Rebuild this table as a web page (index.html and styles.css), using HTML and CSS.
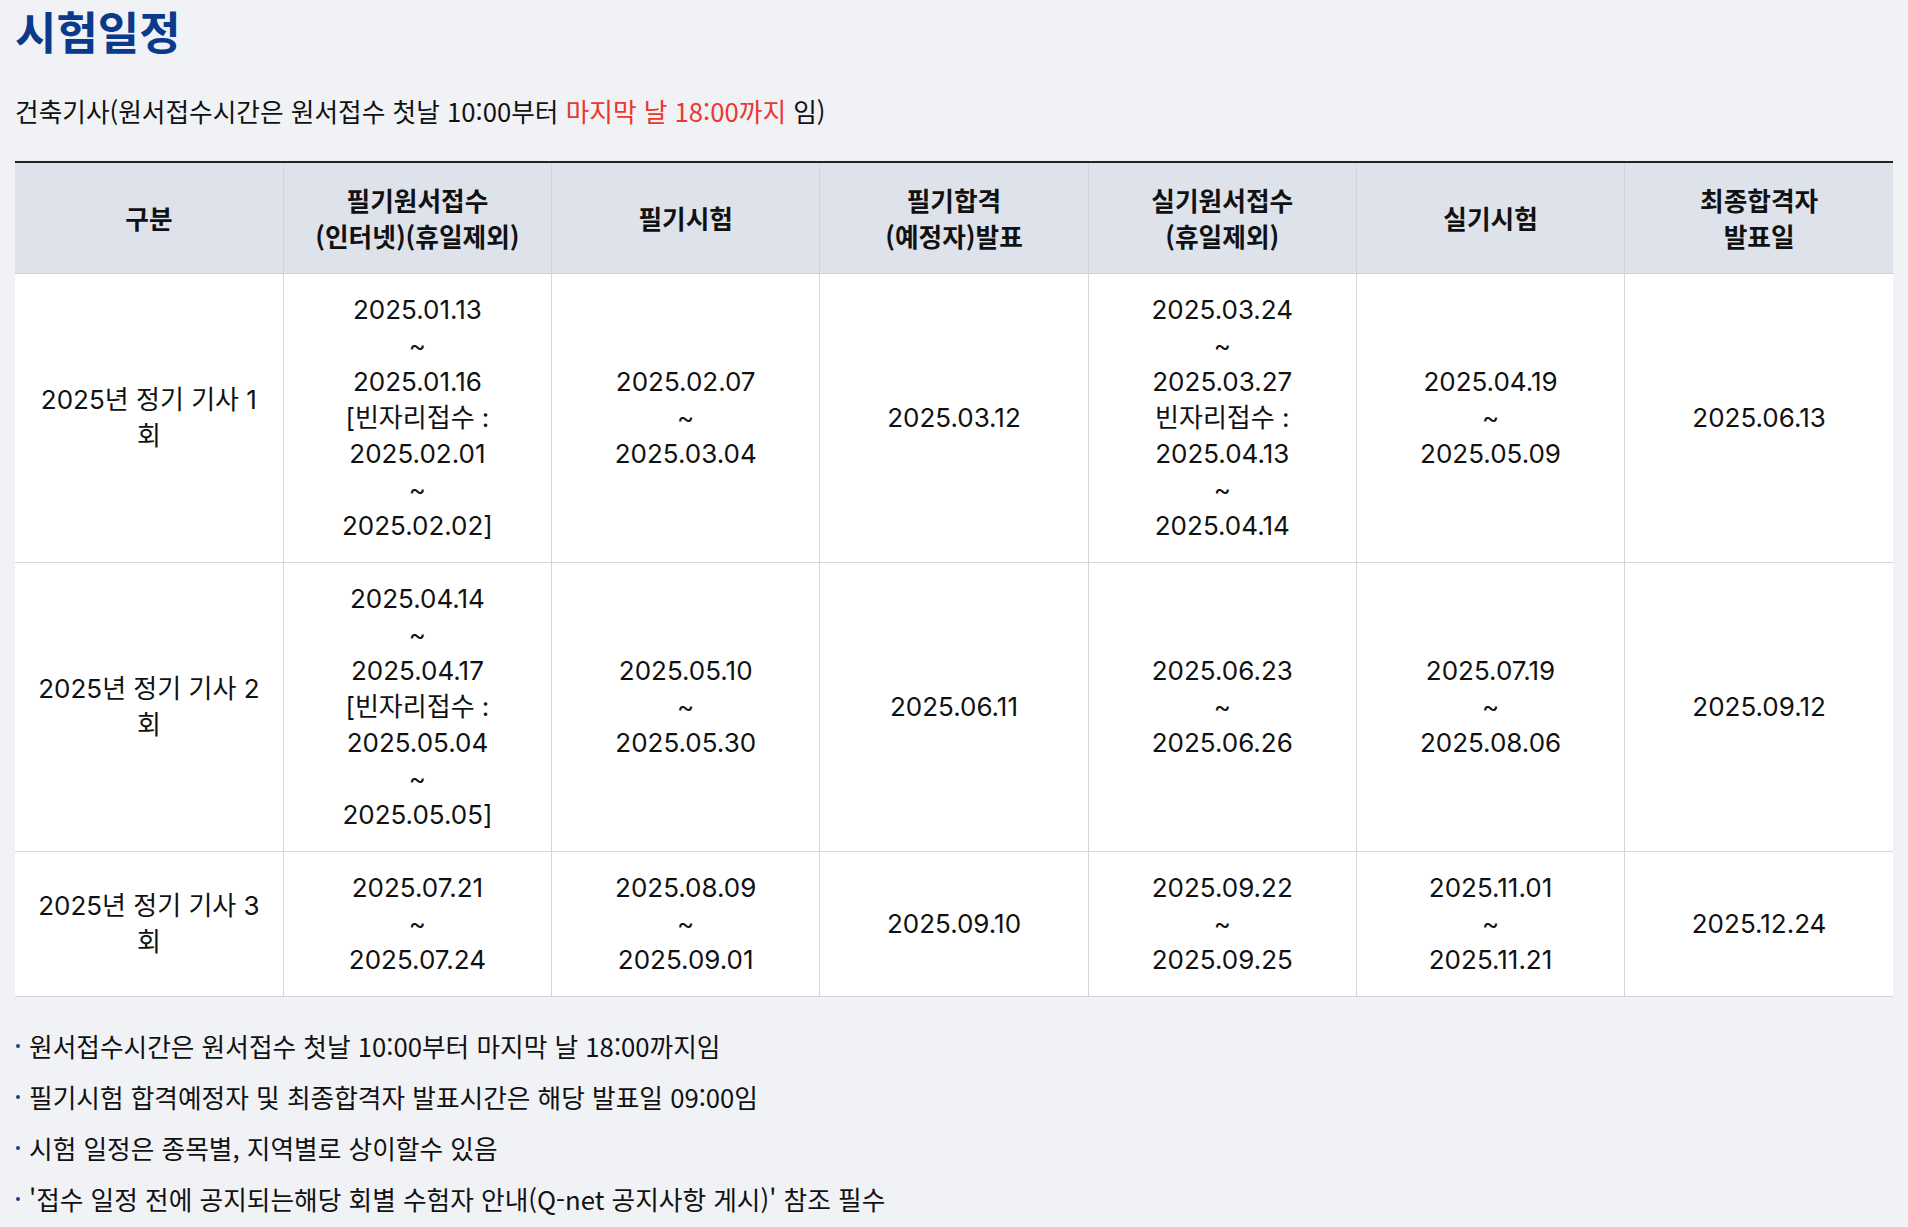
FILE: index.html
```html
<!DOCTYPE html>
<html lang="ko">
<head>
<meta charset="utf-8">
<title>시험일정</title>
<link rel="stylesheet" href="styles.css">
</head>
<body>
<main class="page">
  <h1 class="title">시험일정</h1>
  <p class="intro">건축기사(원서접수시간은 원서접수 첫날 10:00부터 <span class="red">마지막 날 18:00까지</span> 임)</p>
  <table class="schedule">
    <thead>
      <tr>
        <th>구분</th>
        <th>필기원서접수<br>(인터넷)(휴일제외)</th>
        <th>필기시험</th>
        <th>필기합격<br>(예정자)발표</th>
        <th>실기원서접수<br>(휴일제외)</th>
        <th>실기시험</th>
        <th>최종합격자<br>발표일</th>
      </tr>
    </thead>
    <tbody>
      <tr>
        <td>2025년 정기 기사 1<br>회</td>
        <td>2025.01.13<br>~<br>2025.01.16<br>[빈자리접수 :<br>2025.02.01<br>~<br>2025.02.02]</td>
        <td>2025.02.07<br>~<br>2025.03.04</td>
        <td>2025.03.12</td>
        <td>2025.03.24<br>~<br>2025.03.27<br>빈자리접수 :<br>2025.04.13<br>~<br>2025.04.14</td>
        <td>2025.04.19<br>~<br>2025.05.09</td>
        <td>2025.06.13</td>
      </tr>
      <tr>
        <td>2025년 정기 기사 2<br>회</td>
        <td>2025.04.14<br>~<br>2025.04.17<br>[빈자리접수 :<br>2025.05.04<br>~<br>2025.05.05]</td>
        <td>2025.05.10<br>~<br>2025.05.30</td>
        <td>2025.06.11</td>
        <td>2025.06.23<br>~<br>2025.06.26</td>
        <td>2025.07.19<br>~<br>2025.08.06</td>
        <td>2025.09.12</td>
      </tr>
      <tr>
        <td>2025년 정기 기사 3<br>회</td>
        <td>2025.07.21<br>~<br>2025.07.24</td>
        <td>2025.08.09<br>~<br>2025.09.01</td>
        <td>2025.09.10</td>
        <td>2025.09.22<br>~<br>2025.09.25</td>
        <td>2025.11.01<br>~<br>2025.11.21</td>
        <td>2025.12.24</td>
      </tr>
    </tbody>
  </table>
  <ul class="notes">
    <li>원서접수시간은 원서접수 첫날 10:00부터 마지막 날 18:00까지임</li>
    <li>필기시험 합격예정자 및 최종합격자 발표시간은 해당 발표일 09:00임</li>
    <li>시험 일정은 종목별, 지역별로 상이할수 있음</li>
    <li>'접수 일정 전에 공지되는해당 회별 수험자 안내(Q-net 공지사항 게시)' 참조 필수</li>
  </ul>
</main>
</body>
</html>
```
FILE: styles.css
```css
html, body {
  margin: 0;
  padding: 0;
  background: #f0f2f6;
}

body {
  font-family: "Noto Sans CJK KR", "Noto Sans", sans-serif;
  color: #111111;
}

.page {
  padding: 6px 15px 0 15px;
}

.title {
  margin: 0;
  font-size: 45px;
  line-height: 50px;
  font-weight: 700;
  color: #0b3a8c;
}

.intro {
  margin: 37px 0 0 0;
  font-size: 25.7px;
  line-height: 36px;
  color: #111111;
}

.red {
  color: #e8382f;
}

.schedule {
  margin-top: 32px;
  width: 100%;
  table-layout: fixed;
  border-collapse: collapse;
  border-top: 2px solid #222222;
  font-family: Inter, "Noto Sans CJK KR", sans-serif;
  font-size: 26px;
  line-height: 36px;
  color: #111111;
}

.schedule th {
  background: #dee2ea;
  font-family: "Noto Sans CJK KR", sans-serif;
  font-size: 25.7px;
  font-weight: 700;
  padding: 19px 16px;
  border-left: 1px solid #d2d6de;
  border-bottom: 1px solid #cdd1da;
}

.schedule td {
  background: #ffffff;
  text-align: center;
  padding: 18px 16px;
  border-left: 1px solid #d6d6d6;
  border-bottom: 1px solid #d6d6d6;
}

.schedule th:first-child,
.schedule td:first-child {
  border-left: none;
}

.notes {
  list-style: none;
  margin: 31px 0 0 0;
  padding: 0;
}

.notes li {
  display: flex;
  align-items: center;
  gap: 9px;
  font-size: 25.7px;
  line-height: 36px;
  margin-bottom: 15px;
}

.notes li::before {
  content: "";
  width: 4px;
  height: 4px;
  border-radius: 50%;
  background: #1d3f8a;
  flex: none;
  margin-left: 1px;
}
```
